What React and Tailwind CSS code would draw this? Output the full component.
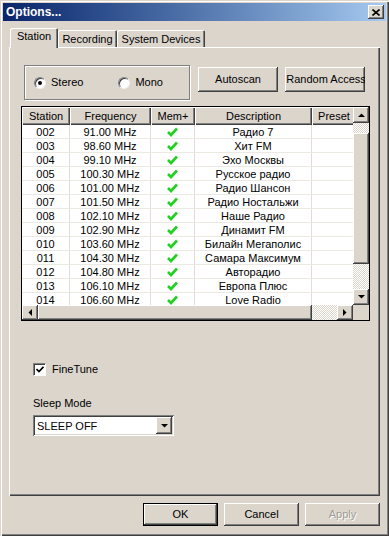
const rows = [
  ["002", "91.00 MHz", "Радио 7"],
  ["003", "98.60 MHz", "Хит FM"],
  ["004", "99.10 MHz", "Эхо Москвы"],
  ["005", "100.30 MHz", "Русское радио"],
  ["006", "101.00 MHz", "Радио Шансон"],
  ["007", "101.50 MHz", "Радио Ностальжи"],
  ["008", "102.10 MHz", "Наше Радио"],
  ["009", "102.90 MHz", "Динамит FM"],
  ["010", "103.60 MHz", "Билайн Мегаполис"],
  ["011", "104.30 MHz", "Самара Максимум"],
  ["012", "104.80 MHz", "Авторадио"],
  ["013", "106.10 MHz", "Европа Плюс"],
  ["014", "106.60 MHz", "Love Radio"],
];

const raised =
  "shadow-[inset_-1px_-1px_#404040,inset_1px_1px_#ffffff,inset_-2px_-2px_#808080,inset_2px_2px_#dbd5cc]";
const sunken =
  "shadow-[inset_1px_1px_#808080,inset_-1px_-1px_#ffffff,inset_2px_2px_#404040,inset_-2px_-2px_#dbd5cc]";
const dither =
  "bg-[repeating-conic-gradient(#ffffff_0%_25%,#dbd5cc_0%_50%)] bg-[length:2px_2px]";

function Arrow({ dir }) {
  const pts = {
    up: "0,4 3.5,0.5 7,4",
    down: "0,0 7,0 3.5,3.5",
    left: "4,0 4,7 0.5,3.5",
    right: "0,0 0,7 3.5,3.5",
  }[dir];
  const vertical = dir === "up" || dir === "down";
  return (
    <svg width={vertical ? 7 : 4} height={vertical ? 4 : 7} viewBox={vertical ? "0 0 7 4" : "0 0 4 7"}>
      <polygon points={pts} fill="#000" />
    </svg>
  );
}

function Check() {
  return (
    <svg width="11" height="10" viewBox="0 0 11 10">
      <path d="M1 5 L4 8 L10 1.5" stroke="#22d022" strokeWidth="2.6" fill="none" strokeLinejoin="miter" />
    </svg>
  );
}

function Btn({ children, w = "w-[80px]", h = "h-[25px]", isDefault, disabled }) {
  const inner = (
    <div className={`${w} ${h} ${raised} flex items-center justify-center ${disabled ? "text-[#a09c94] [text-shadow:1px_1px_#fff]" : "text-black"} overflow-hidden whitespace-nowrap`}>
      {children}
    </div>
  );
  if (isDefault) return <div className="border border-black">{inner}</div>;
  return inner;
}

function Radio({ on, label }) {
  return (
    <div className="flex items-center gap-[5px]">
      <div className="w-[12px] h-[12px] rounded-full bg-white border border-t-[#808080] border-l-[#808080] border-r-[#f0f0f0] border-b-[#f0f0f0] flex items-center justify-center shadow-[inset_1px_1px_#404040]">
        {on && <div className="w-[4px] h-[4px] rounded-full bg-black" />}
      </div>
      <span>{label}</span>
    </div>
  );
}

export default function App() {
  return (
    <div
      className="w-[389px] h-[536px] bg-[#dbd5cc] p-[3px] flex flex-col text-[11px] leading-[13px] text-black shadow-[inset_1px_1px_#dbd5cc,inset_2px_2px_#ffffff,inset_-1px_-1px_#404040,inset_-2px_-2px_#808080]"
      style={{ fontFamily: '"Liberation Sans", Arial, sans-serif' }}
    >
      {/* title bar */}
      <div className="h-[18px] bg-gradient-to-r from-[#0a246a] to-[#a6caf0] flex items-center justify-between pl-[3px] pr-[2px]">
        <span className="text-white font-bold text-[12px]">Options...</span>
        <div className={`w-[16px] h-[14px] ${raised} bg-[#dbd5cc] flex items-center justify-center`}>
          <svg width="8" height="7" viewBox="0 0 8 7">
            <path d="M0.5 0.5 L7.5 6.5 M7.5 0.5 L0.5 6.5" stroke="#000" strokeWidth="1.6" />
          </svg>
        </div>
      </div>

      <div className="flex-1 flex flex-col px-[6px] pt-[7px]">
        {/* tabs */}
        <div className="flex items-end h-[19px] pl-px">
          <div className="relative z-10 -mb-px w-[48px] h-[20px] bg-[#dbd5cc] flex items-center justify-center pb-[3px] rounded-t-[2px] shadow-[inset_1px_1px_#ffffff,inset_-1px_0_#404040,inset_-2px_0_#808080]">
            Station
          </div>
          <div className="w-[59px] h-[17px] flex items-center justify-center pt-px rounded-t-[2px] shadow-[inset_1px_1px_#ffffff,inset_-1px_0_#404040,inset_-2px_0_#808080]">
            Recording
          </div>
          <div className="w-[88px] h-[17px] flex items-center justify-center pt-px rounded-t-[2px] shadow-[inset_1px_1px_#ffffff,inset_-1px_0_#404040,inset_-2px_0_#808080]">
            System Devices
          </div>
        </div>

        {/* panel */}
        <div className="h-[449px] pt-[18px] pl-[12px] flex flex-col shadow-[inset_1px_1px_#ffffff,inset_-1px_-1px_#404040,inset_-2px_-2px_#808080]">
          <div className="flex items-start pl-[3px]">
            <div className="w-[166px] h-[35px] border border-[#808080] shadow-[inset_1px_1px_#ffffff,1px_1px_#ffffff] flex items-center pl-[9px] gap-[35px]">
              <Radio on label="Stereo" />
              <Radio label="Mono" />
            </div>
            <div className="flex gap-[7px] mt-[2px] ml-[8px]">
              <Btn>Autoscan</Btn>
              <Btn>
                <span className="pl-[2px] self-center">Random Access</span>
              </Btn>
            </div>
          </div>

          {/* list view */}
          <div className="mt-[6px] w-[349px] h-[215px] border border-black bg-white flex flex-col">
            <div className="flex flex-1 min-h-0">
              <div className="w-[331px] overflow-hidden flex flex-col">
                <div className="flex h-[18px] bg-[#dbd5cc] shrink-0">
                  {[
                    ["Station", "w-[48px]"],
                    ["Frequency", "w-[81px]"],
                    ["Mem+", "w-[44px]"],
                    ["Description", "w-[117px]"],
                    ["Preset", "w-[44px]"],
                  ].map(([t, w]) => (
                    <div
                      key={t}
                      className={`${w} shrink-0 flex items-center justify-center shadow-[inset_1px_1px_#ffffff,inset_-1px_-1px_#404040,inset_-2px_-2px_#808080]`}
                    >
                      {t}
                    </div>
                  ))}
                </div>
                {rows.map(([n, f, d]) => (
                  <div key={n} className="flex h-[14px] shrink-0 border-b border-[#ece9e2]">
                    <div className="w-[48px] shrink-0 flex items-center justify-center border-r border-[#e2ded6] pt-[2px]">{n}</div>
                    <div className="w-[81px] shrink-0 flex items-center justify-center border-r border-[#e2ded6] pt-[2px]">{f}</div>
                    <div className="w-[44px] shrink-0 flex items-center justify-center border-r border-[#e2ded6] pt-[1px]">
                      <Check />
                    </div>
                    <div className="w-[117px] shrink-0 flex items-center justify-center border-r border-[#e2ded6] pt-[2px] whitespace-nowrap">{d}</div>
                    <div className="w-[44px] shrink-0" />
                  </div>
                ))}
              </div>
              {/* vertical scrollbar */}
              <div className="w-[16px] flex flex-col">
                <div className={`h-[16px] ${raised} bg-[#dbd5cc] flex items-center justify-center`}>
                  <Arrow dir="up" />
                </div>
                <div className={`h-[10px] ${dither}`} />
                <div className={`h-[131px] ${raised} bg-[#dbd5cc]`} />
                <div className={`flex-1 ${dither}`} />
                <div className={`h-[16px] ${raised} bg-[#dbd5cc] flex items-center justify-center`}>
                  <Arrow dir="down" />
                </div>
              </div>
            </div>
            {/* horizontal scrollbar */}
            <div className="h-[15px] flex shrink-0">
              <div className={`w-[16px] ${raised} bg-[#dbd5cc] flex items-center justify-center`}>
                <Arrow dir="left" />
              </div>
              <div className={`w-[274px] ${raised} bg-[#dbd5cc]`} />
              <div className={`flex-1 ${dither}`} />
              <div className={`w-[16px] ${raised} bg-[#dbd5cc] flex items-center justify-center`}>
                <Arrow dir="right" />
              </div>
              <div className="w-[16px] bg-[#dbd5cc]" />
            </div>
          </div>

          {/* fine tune */}
          <div className="mt-[42px] ml-[12px] flex items-center gap-[6px]">
            <div className="w-[13px] h-[13px] bg-white border border-t-[#808080] border-l-[#808080] border-r-white border-b-white shadow-[inset_1px_1px_#404040] flex items-center justify-center">
              <svg width="8" height="7" viewBox="0 0 8 7">
                <path d="M0.5 3 L3 5.5 L7.5 0.8" stroke="#000" strokeWidth="1.7" fill="none" />
              </svg>
            </div>
            <span>FineTune</span>
          </div>

          <div className="mt-[21px] ml-[12px]">Sleep Mode</div>
          <div className={`mt-[5px] ml-[12px] w-[141px] h-[21px] bg-white ${sunken} flex items-center justify-between pl-[4px] pr-[2px]`}>
            <span className="pt-px">SLEEP OFF</span>
            <div className={`w-[16px] h-[17px] ${raised} bg-[#dbd5cc] flex items-center justify-center`}>
              <Arrow dir="down" />
            </div>
          </div>
        </div>

        {/* bottom buttons */}
        <div className="flex justify-end gap-[6px] mt-[7px]">
          <Btn w="w-[73px]" h="h-[21px]" isDefault>OK</Btn>
          <Btn w="w-[75px]" h="h-[23px]">Cancel</Btn>
          <Btn w="w-[75px]" h="h-[23px]" disabled>Apply</Btn>
        </div>
      </div>
    </div>
  );
}
